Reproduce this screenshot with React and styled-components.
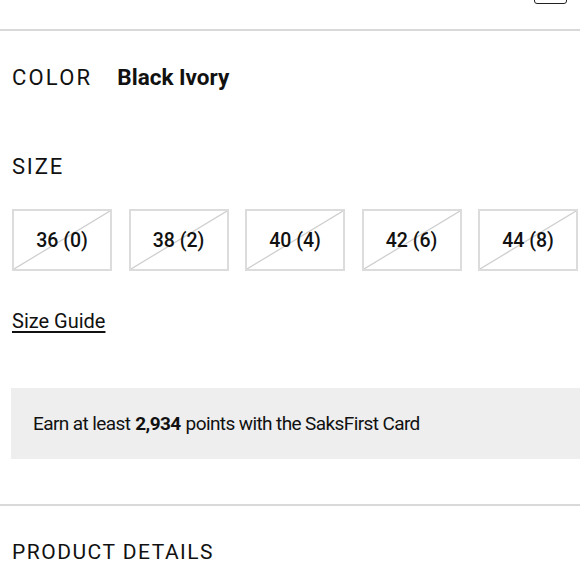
import React from "react";
import styled, { createGlobalStyle } from "styled-components";

const GlobalStyle = createGlobalStyle`
  html, body {
    margin: 0;
    padding: 0;
    background: #ffffff;
    overflow: hidden;
  }
  body {
    font-family: Roboto, "Liberation Sans", sans-serif;
    color: #111;
  }
`;

const sizes = ["36 (0)", "38 (2)", "40 (4)", "42 (6)", "44 (8)"];

const App = () => {
  return (
    <Page>
      <GlobalStyle />
      <TopBar>
        <BagButton />
      </TopBar>
      <Divider />
      <ColorRow>
        <Label>COLOR</Label>
        <ColorName>Black Ivory</ColorName>
      </ColorRow>
      <SizeLabel>SIZE</SizeLabel>
      <SizeGrid>
        {sizes.map((s) => (
          <SizeBox key={s}>
            <Strike viewBox="0 0 100 100" preserveAspectRatio="none">
              <line x1="0" y1="100" x2="100" y2="0" />
            </Strike>
            <SizeText>{s}</SizeText>
          </SizeBox>
        ))}
      </SizeGrid>
      <GuideLink>Size Guide</GuideLink>
      <Points>
        Earn at least <strong>2,934</strong> points with the SaksFirst Card
      </Points>
      <Divider $top={45} />
      <Heading>PRODUCT DETAILS</Heading>
    </Page>
  );
};

export default App;

const Page = styled.div`
  width: 580px;
  height: 580px;
  overflow: hidden;
  position: relative;
`;

const TopBar = styled.div`
  height: 29px;
  display: flex;
  justify-content: flex-end;
  padding-right: 13px;
`;

const BagButton = styled.div`
  width: 31px;
  height: 12px;
  margin-top: -10px;
  border: 1.5px solid #222;
  border-radius: 3px;
`;

const Divider = styled.div`
  height: 2px;
  background: #d9d9d9;
  margin-top: ${(p) => p.$top || 0}px;
`;

const ColorRow = styled.div`
  display: flex;
  align-items: baseline;
  gap: 25px;
  padding: 31px 12px 0;
  height: 30px;
`;

const Label = styled.div`
  font-size: 22px;
  letter-spacing: 2.2px;
  font-weight: 400;
  line-height: 30px;
`;

const ColorName = styled.div`
  font-size: 22.5px;
  font-weight: 700;
  line-height: 30px;
`;

const SizeLabel = styled(Label)`
  padding: 60px 12px 0;
  letter-spacing: 1.8px;
`;

const SizeGrid = styled.div`
  display: flex;
  gap: 16.5px;
  padding: 27px 0 0 12px;
`;

const SizeBox = styled.div`
  position: relative;
  flex: 0 0 auto;
  width: 100px;
  height: 62px;
  box-sizing: border-box;
  border: 2px solid #dcdcdc;
  display: flex;
  align-items: center;
  justify-content: center;
`;

const Strike = styled.svg`
  position: absolute;
  inset: 0;
  width: 100%;
  height: 100%;

  line {
    stroke: #cfcfcf;
    stroke-width: 1.3px;
    vector-effect: non-scaling-stroke;
  }
`;

const SizeText = styled.span`
  position: relative;
  font-size: 19.5px;
  font-weight: 500;
  color: #111;
`;

const GuideLink = styled.a`
  display: inline-block;
  margin: 38px 0 0 12px;
  font-size: 20px;
  color: #111;
  text-decoration: underline;
  text-underline-offset: 3px;
  text-decoration-thickness: 1.5px;
`;

const Points = styled.div`
  margin: 55px 0 0 11px;
  height: 71px;
  background: #eeeeee;
  display: flex;
  align-items: center;
  padding-left: 22px;
  font-size: 19px;
  letter-spacing: -0.6px;
  color: #111;

  strong {
    font-weight: 700;
    margin: 0 5px;
  }
`;

const Heading = styled(Label)`
  padding: 31px 12px 0;
  font-size: 21px;
  letter-spacing: 1.5px;
`;
